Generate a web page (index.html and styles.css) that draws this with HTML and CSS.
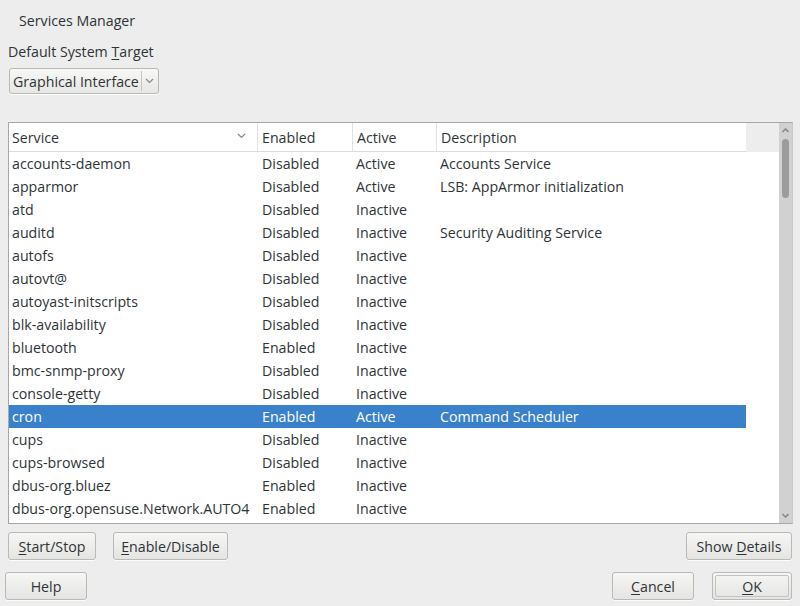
FILE: index.html
```html
<!DOCTYPE html>
<html>
<head>
<meta charset="utf-8">
<link rel="stylesheet" href="styles.css">
</head>
<body>
<div class="window">
  <div class="title">Services Manager</div>
  <div class="label">Default System <u>T</u>arget</div>
  <div class="combo"><span class="combo-text">Graphical Interface</span><span class="combo-sep"></span><svg class="combo-arrow" width="9" height="6" viewBox="0 0 9 6"><path d="M1 1 L4.5 4.5 L8 1" fill="none" stroke="#888a85" stroke-width="1.2"/></svg></div>
  <div class="frame">
    <div class="main">
      <div class="header">
        <div class="hcells">
          <div class="hc c1">Service<svg class="sort" width="9" height="6" viewBox="0 0 9 6"><path d="M1 1 L4.5 4.5 L8 1" fill="none" stroke="#888a85" stroke-width="1.2"/></svg></div>
          <div class="hc c2">Enabled</div>
          <div class="hc c3">Active</div>
          <div class="hc c4">Description</div>
        </div>
        <div class="hfill"></div>
      </div>
      <div class="rows">
        <div class="row"><span class="c1">accounts-daemon</span><span class="c2">Disabled</span><span class="c3">Active</span><span class="c4">Accounts Service</span></div>
        <div class="row"><span class="c1">apparmor</span><span class="c2">Disabled</span><span class="c3">Active</span><span class="c4">LSB: AppArmor initialization</span></div>
        <div class="row"><span class="c1">atd</span><span class="c2">Disabled</span><span class="c3">Inactive</span><span class="c4"></span></div>
        <div class="row"><span class="c1">auditd</span><span class="c2">Disabled</span><span class="c3">Inactive</span><span class="c4">Security Auditing Service</span></div>
        <div class="row"><span class="c1">autofs</span><span class="c2">Disabled</span><span class="c3">Inactive</span><span class="c4"></span></div>
        <div class="row"><span class="c1">autovt@</span><span class="c2">Disabled</span><span class="c3">Inactive</span><span class="c4"></span></div>
        <div class="row"><span class="c1">autoyast-initscripts</span><span class="c2">Disabled</span><span class="c3">Inactive</span><span class="c4"></span></div>
        <div class="row"><span class="c1">blk-availability</span><span class="c2">Disabled</span><span class="c3">Inactive</span><span class="c4"></span></div>
        <div class="row"><span class="c1">bluetooth</span><span class="c2">Enabled</span><span class="c3">Inactive</span><span class="c4"></span></div>
        <div class="row"><span class="c1">bmc-snmp-proxy</span><span class="c2">Disabled</span><span class="c3">Inactive</span><span class="c4"></span></div>
        <div class="row"><span class="c1">console-getty</span><span class="c2">Disabled</span><span class="c3">Inactive</span><span class="c4"></span></div>
        <div class="row selected"><span class="c1">cron</span><span class="c2">Enabled</span><span class="c3">Active</span><span class="c4">Command Scheduler</span></div>
        <div class="row"><span class="c1">cups</span><span class="c2">Disabled</span><span class="c3">Inactive</span><span class="c4"></span></div>
        <div class="row"><span class="c1">cups-browsed</span><span class="c2">Disabled</span><span class="c3">Inactive</span><span class="c4"></span></div>
        <div class="row"><span class="c1">dbus-org.bluez</span><span class="c2">Enabled</span><span class="c3">Inactive</span><span class="c4"></span></div>
        <div class="row"><span class="c1">dbus-org.opensuse.Network.AUTO4</span><span class="c2">Enabled</span><span class="c3">Inactive</span><span class="c4"></span></div>
      </div>
    </div>
    <div class="scrollbar">
      <svg class="sb-arrow" width="7" height="5" viewBox="0 0 7 5"><path d="M0.5 4 L3.5 1 L6.5 4" fill="none" stroke="#8a8a8a" stroke-width="1.6"/></svg>
      <div class="thumb"></div>
      <div class="sb-space"></div>
      <svg class="sb-arrow" width="7" height="5" viewBox="0 0 7 5"><path d="M0.5 1 L3.5 4 L6.5 1" fill="none" stroke="#8a8a8a" stroke-width="1.6"/></svg>
    </div>
  </div>
  <div class="btnrow1">
    <div class="btn b-start"><span><u>S</u>tart/Stop</span></div>
    <div class="btn b-enable"><span><u>E</u>nable/Disable</span></div>
    <div class="spacer"></div>
    <div class="btn b-details"><span>Show <u>D</u>etails</span></div>
  </div>
  <div class="btnrow2">
    <div class="btn b-help"><span>Help</span></div>
    <div class="spacer"></div>
    <div class="btn b-cancel"><span><u>C</u>ancel</span></div>
    <div class="btn b-ok"><span class="ok-inner"><span><u>O</u>K</span></span></div>
  </div>
</div>
</body>
</html>
```

FILE: styles.css
```css
* { box-sizing: border-box; }
html, body {
  margin: 0;
  padding: 0;
  background: #ededed;
}
body {
  font-family: "Open Sans", "DejaVu Sans", sans-serif;
  font-size: 14.2px;
  color: #2e3436;
  width: 800px;
  height: 606px;
  overflow: hidden;
}
u { text-decoration: underline; text-underline-offset: 2px; }
.window {
  display: flex;
  flex-direction: column;
  height: 606px;
}
.title {
  height: 20px;
  line-height: 20px;
  margin-top: 11px;
  padding-left: 19px;
}
.label {
  height: 20px;
  line-height: 20px;
  margin-top: 11px;
  padding-left: 8px;
}
.combo {
  margin-top: 6px;
  margin-left: 9px;
  width: 150px;
  height: 26px;
  border: 1px solid #b9b9b6;
  border-radius: 3px;
  background: linear-gradient(#f8f8f7, #e6e6e4);
  display: flex;
  align-items: center;
  box-shadow: 0 1px 0 rgba(255,255,255,0.8);
}
.combo-text {
  padding-left: 3px;
  flex: 1;
  white-space: nowrap;
}
.combo-sep {
  width: 1px;
  height: 20px;
  background: #c4c4c1;
  margin-right: 3px;
}
.combo-arrow { margin-right: 4px; }
.frame {
  margin-top: 28px;
  margin-left: 8px;
  width: 785px;
  height: 402px;
  border: 1px solid #a7a7a7;
  border-right-color: #c9c9c9;
  background: #ffffff;
  display: flex;
}
.main {
  flex: 1;
  display: flex;
  flex-direction: column;
}
.header {
  display: flex;
  height: 29px;
  background: #ededed;
}
.hcells {
  width: 737px;
  display: flex;
  background: #ffffff;
  border-bottom: 1px solid #dcdcdc;
}
.hfill { flex: 1; }
.hc {
  display: flex;
  align-items: center;
  padding-left: 4px;
  padding-top: 1px;
  height: 100%;
  white-space: nowrap;
}
.hc.c1 { width: 248px; padding-left: 3px; }
.hc.c2 { width: 95px; }
.hc.c3 { width: 84px; }
.hc.c4 { flex: 1; }
.hc.c2, .hc.c3, .hc.c4 { border-left: 1px solid #e2e2e2; }
.sort { margin-left: auto; margin-right: 11px; margin-top: -4px; }
.rows { display: flex; flex-direction: column; }
.row {
  width: 737px;
  height: 23px;
  line-height: 24px;
  display: flex;
  white-space: nowrap;
}
.row span { display: block; overflow: visible; }
.row .c1 { width: 248px; padding-left: 3px; }
.row .c2 { width: 95px; padding-left: 5px; }
.row .c3 { width: 84px; padding-left: 4px; }
.row .c4 { flex: 1; padding-left: 4px; }
.row.selected { background: #3a81cc; color: #ffffff; }
.scrollbar {
  width: 13px;
  background: #d1d1d1;
  display: flex;
  flex-direction: column;
  align-items: center;
  padding: 5px 0 5px;
}
.sb-arrow { flex: none; }
.thumb {
  margin-top: 6px;
  width: 7px;
  height: 59px;
  border-radius: 4px;
  background: #9c9c9a;
}
.sb-space { flex: 1; }
.btnrow1 {
  display: flex;
  margin-top: 8px;
  padding-left: 8px;
  padding-right: 8px;
  gap: 17px;
}
.btnrow2 {
  display: flex;
  margin-top: 12px;
  padding-left: 5px;
  padding-right: 8px;
}
.spacer { flex: 1; }
.btn {
  height: 28px;
  border: 1px solid #b9b9b6;
  border-radius: 3px;
  background: linear-gradient(#f6f6f5, #e4e4e2);
  display: flex;
  align-items: center;
  justify-content: center;
  white-space: nowrap;
  box-shadow: 0 1px 0 rgba(255,255,255,0.8);
}
.b-start { width: 88px; }
.b-enable { width: 115px; }
.b-details { width: 106px; }
.b-help { width: 82px; }
.b-cancel { width: 82px; margin-right: 18px; }
.b-ok { width: 80px; padding: 2px; }
.ok-inner {
  width: 100%;
  height: 100%;
  border: 1px solid #c2c2c0;
  border-radius: 2px;
  display: flex;
  align-items: center;
  justify-content: center;
}
```
